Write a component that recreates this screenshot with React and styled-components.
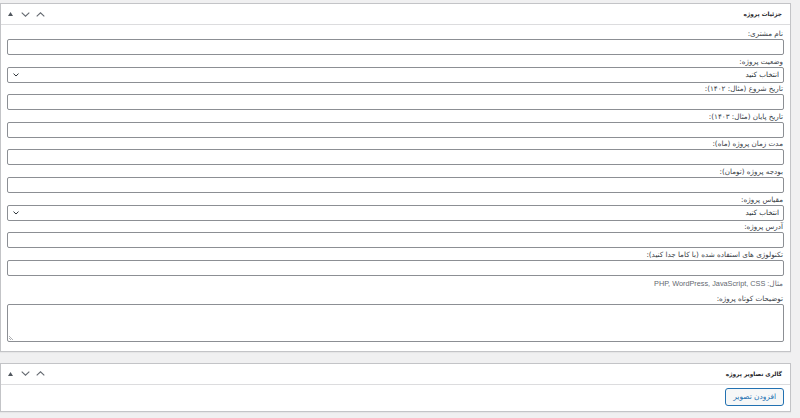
import React from "react";
import styled, { createGlobalStyle } from "styled-components";

const Global = createGlobalStyle`
  html, body { margin: 0; padding: 0; background: #f0f0f1; }
  body { font-family: "DejaVu Sans", "Noto Sans", sans-serif; }
  * { box-sizing: border-box; }
`;

const Page = styled.div`
  width: 800px;
  height: 418px;
  padding: 3px 9px 0 0;
  display: flex;
  flex-direction: column;
  gap: 11px;
`;

const Box = styled.section`
  direction: rtl;
  background: #fff;
  border: 1px solid #c3c4c7;
  box-shadow: 0 1px 1px rgba(0, 0, 0, 0.04);
`;

const Header = styled.div`
  height: 21px;
  border-bottom: 1px solid #dcdcde;
  display: flex;
  align-items: center;
  justify-content: space-between;
  padding: 0 8px 0 5px;
`;

const Title = styled.h2`
  margin: 0;
  font-size: 5.8px;
  font-weight: 700;
  color: #1d2327;
`;

const Actions = styled.div`
  direction: ltr;
  display: flex;
  align-items: center;
  gap: 6px;
`;

const IconBtn = styled.span`
  width: 9px;
  height: 9px;
  display: flex;
  align-items: center;
  justify-content: center;
`;

const Body = styled.div`
  padding: 3px 6px 9px;
`;

const ButtonRow = styled.div`
  display: flex;
  padding: 3px 6px 5px;
`;

const Label = styled.label`
  display: block;
  height: 11px;
  line-height: 11px;
  font-size: 7.2px;
  color: #3c434a;
  padding-right: 1px;
`;

const Field = styled.div`
  margin-bottom: ${(p) => p.$mb || "0.6px"};
`;

const Input = styled.div`
  height: 16px;
  border: 1px solid #8c8f94;
  border-radius: 2px;
  background: #fff;
`;

const Select = styled.div`
  height: 16px;
  border: 1px solid #8c8f94;
  border-radius: 2px;
  background: #fff;
  display: flex;
  align-items: center;
  justify-content: space-between;
  padding: 0 4px 0 5px;
  font-size: 7.2px;
  color: #2c3338;
`;

const Textarea = styled.div`
  position: relative;
  height: 38px;
  border: 1px solid #8c8f94;
  border-radius: 2px;
  background: #fff;
`;

const Grip = styled.svg`
  position: absolute;
  left: 1px;
  bottom: 1px;
`;

const Hint = styled.p`
  margin: 2px 1px 4px;
  font-family: "Liberation Sans", "DejaVu Sans", sans-serif;
  font-size: 7.3px;
  color: #646970;
  height: 11px;
  line-height: 11px;
`;

const Button = styled.button`
  font-family: inherit;
  height: 18px;
  padding: 0 7px;
  font-size: 7.4px;
  line-height: 16px;
  color: #2271b1;
  border: 1px solid #2271b1;
  border-radius: 3px;
  background: #f6f7f7;
`;

const Triangle = () => (
  <svg width="5" height="4" viewBox="0 0 5 4"><path d="M0 4 L2.5 0 L5 4 Z" fill="#50575e" /></svg>
);
const ChevDown = () => (
  <svg width="9" height="5" viewBox="0 0 9 5"><path d="M0.7 0.7 L4.5 4.2 L8.3 0.7" fill="none" stroke="#646970" strokeWidth="1.1" /></svg>
);
const ChevUp = () => (
  <svg width="9" height="5" viewBox="0 0 9 5"><path d="M0.7 4.3 L4.5 0.8 L8.3 4.3" fill="none" stroke="#646970" strokeWidth="1.1" /></svg>
);
const SelChev = () => (
  <svg width="6" height="4" viewBox="0 0 6 4"><path d="M0.5 0.6 L3 3 L5.5 0.6" fill="none" stroke="#2c3338" strokeWidth="1" /></svg>
);

const BoxHeader = ({ title }) => (
  <Header>
    <Title>{title}</Title>
    <Actions>
      <IconBtn><Triangle /></IconBtn>
      <IconBtn><ChevDown /></IconBtn>
      <IconBtn><ChevUp /></IconBtn>
    </Actions>
  </Header>
);

const fields = [
  { label: "نام مشتری:" },
  { label: "وضعیت پروژه:", select: true },
  { label: "تاریخ شروع (مثال: ۱۴۰۲):" },
  { label: "تاریخ پایان (مثال: ۱۴۰۳):" },
  { label: "مدت زمان پروژه (ماه):" },
  { label: "بودجه پروژه (تومان):" },
  { label: "مقیاس پروژه:", select: true },
  { label: "آدرس پروژه:" },
];

export default function App() {
  return (
    <>
      <Global />
      <Page>
        <Box>
          <BoxHeader title="جزئیات پروژه" />
          <Body>
            {fields.map((f) => (
              <Field key={f.label}>
                <Label>{f.label}</Label>
                {f.select ? (
                  <Select>
                    <span>انتخاب کنید</span>
                    <SelChev />
                  </Select>
                ) : (
                  <Input />
                )}
              </Field>
            ))}
            <Field $mb="0">
              <Label>تکنولوژی های استفاده شده (با کاما جدا کنید):</Label>
              <Input />
              <Hint>مثال: PHP, WordPress, JavaScript, CSS</Hint>
            </Field>
            <Field $mb="0">
              <Label>توضیحات کوتاه پروژه:</Label>
              <Textarea>
                <Grip width="5" height="5" viewBox="0 0 5 5">
                  <path d="M0 1 L4 5 M0 3 L2 5" stroke="#8c8f94" strokeWidth="0.7" />
                </Grip>
              </Textarea>
            </Field>
          </Body>
        </Box>
        <Box>
          <BoxHeader title="گالری تصاویر پروژه" />
          <ButtonRow>
            <Button>افزودن تصویر</Button>
          </ButtonRow>
        </Box>
      </Page>
    </>
  );
}
